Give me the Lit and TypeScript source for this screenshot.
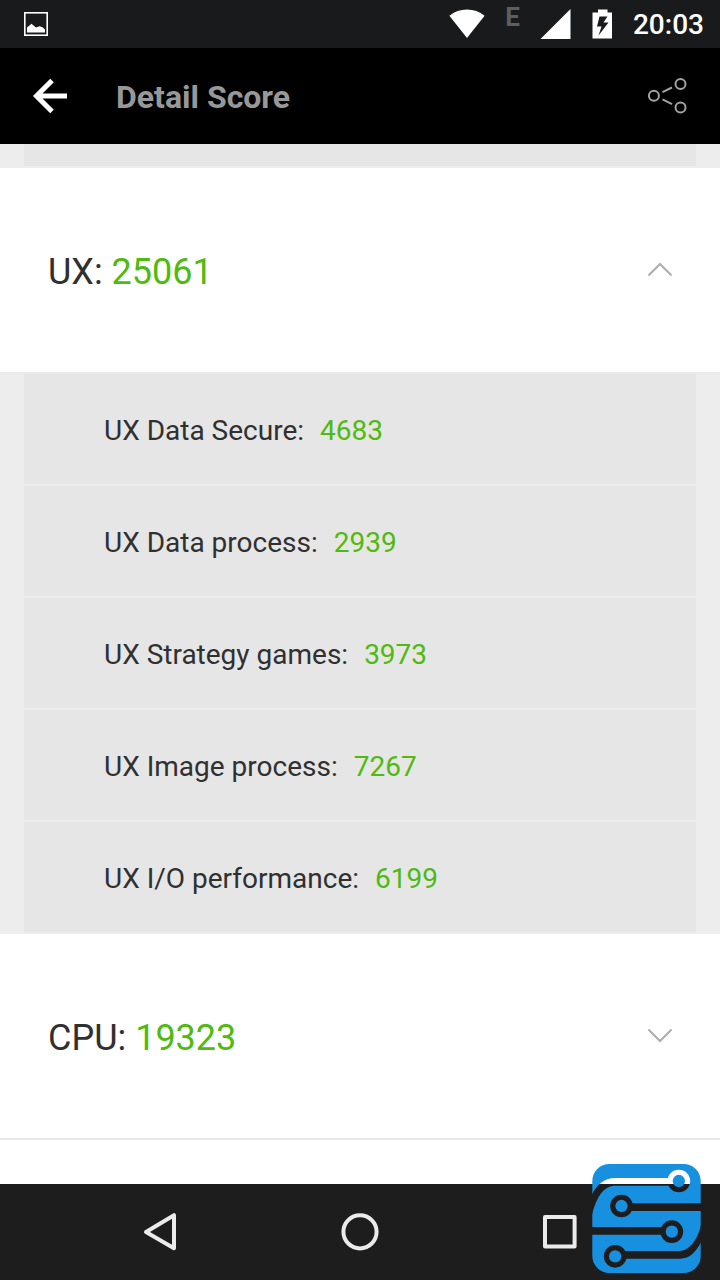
import { LitElement, html, css, nothing } from "lit";
import { customElement, property, state } from "lit/decorators.js";

interface Entry {
  label: string;
  value: number;
}

interface Section extends Entry {
  items: Entry[];
}

const SECTIONS: Section[] = [
  {
    label: "UX",
    value: 25061,
    items: [
      { label: "UX Data Secure", value: 4683 },
      { label: "UX Data process", value: 2939 },
      { label: "UX Strategy games", value: 3973 },
      { label: "UX Image process", value: 7267 },
      { label: "UX I/O performance", value: 6199 },
    ],
  },
  { label: "CPU", value: 19323, items: [] },
];

@customElement("status-bar")
class StatusBar extends LitElement {
  static styles = css`
    :host {
      display: flex;
      align-items: center;
      flex: none;
      box-sizing: border-box;
      height: 48px;
      padding: 0 16px 0 24px;
      background: #191a1c;
      color: #fff;
    }
    svg {
      display: block;
      flex: none;
    }
    .picture {
      margin-right: auto;
    }
    .icons {
      display: flex;
      align-items: center;
      gap: 20px;
      height: 48px;
    }
    .network {
      align-self: flex-start;
      padding-top: 2px;
      font-size: 26px;
      line-height: 30px;
      font-weight: 700;
      color: #5d5e60;
    }
    .time {
      padding-top: 2px;
      font-size: 28px;
      line-height: 32px;
      font-weight: 500;
    }
  `;

  render() {
    return html`
      <svg class="picture" width="24" height="24" viewBox="0 0 24 24">
        <rect x="0.8" y="0.8" width="22.4" height="22.4" fill="none" stroke="#fff" stroke-width="1.6" />
        <path d="M3 20.5V15.5L7.5 11.7L12 15.6L15.5 14.3L18.5 15.2L21 17.5V20.5Z" fill="#fff" />
      </svg>
      <div class="icons">
        <svg width="36" height="30" viewBox="0 0 36 30">
          <path d="M0.4 6.8Q8 0.6 18 0.6T35.6 6.8L18 29Z" fill="#fff" />
        </svg>
        <span class="network">E</span>
        <svg width="31" height="30" viewBox="0 0 31 30">
          <path d="M30.5 0V30H0.5Z" fill="#fff" />
        </svg>
        <svg width="22" height="30" viewBox="0 0 22 30">
          <path fill="#fff" fill-rule="evenodd"
            d="M7 0.5H16.5V3.5H21V29.5H1.5V3.5H7ZM8.5 7.5L6 17.5H10.5L7.5 26.5L17.5 13.5H12.5L16.5 7.5Z" />
        </svg>
        <span class="time">20:03</span>
      </div>
    `;
  }
}

@customElement("app-bar")
class AppBar extends LitElement {
  @property() heading = "";

  static styles = css`
    :host {
      display: flex;
      align-items: center;
      flex: none;
      height: 96px;
      padding: 0 32px;
      background: #000;
    }
    .action {
      flex: none;
      padding: 0;
      border: 0;
      background: none;
      cursor: pointer;
    }
    .action svg {
      display: block;
    }
    .title {
      flex: 1;
      margin: 0 0 0 48px;
      padding-top: 2px;
      font-size: 32px;
      line-height: 40px;
      font-weight: 700;
      color: #989898;
    }
  `;

  render() {
    return html`
      <button class="action" aria-label="Back">
        <svg width="36" height="36" viewBox="0 0 36 36" fill="none" stroke="#fff" stroke-width="5">
          <path d="M20 2.5L4.5 18L20 33.5M4 18H35" />
        </svg>
      </button>
      <h1 class="title">${this.heading}</h1>
      <button class="action" aria-label="Share">
        <svg width="42" height="38" viewBox="0 0 42 38" fill="none" stroke="#a3a3a3" stroke-width="2">
          <circle cx="7.9" cy="18.8" r="5" />
          <circle cx="34.5" cy="7" r="5" />
          <circle cx="34.5" cy="30.6" r="5" />
          <path d="M16.5 15.2L26 10.5M16.5 22.3L26 27.1" />
        </svg>
      </button>
    `;
  }
}

@customElement("score-section")
class ScoreSection extends LitElement {
  @property({ attribute: false }) section!: Section;
  @property({ type: Boolean }) open = false;

  static styles = css`
    :host {
      display: block;
    }
    .header {
      display: flex;
      align-items: center;
      justify-content: space-between;
      box-sizing: border-box;
      width: 100%;
      height: 206px;
      padding: 4px 48px 0;
      border: 0;
      border-bottom: 2px solid #e8e8e8;
      background: #fff;
      font: inherit;
      font-size: 36px;
      line-height: 44px;
      color: #303030;
      text-align: left;
      cursor: pointer;
    }
    .header.open {
      border-bottom-color: #ebebeb;
    }
    .value {
      color: #4fba0f;
    }
    .chevron {
      display: block;
      fill: none;
      stroke: #adadad;
      stroke-width: 2;
    }
    .list {
      display: flow-root;
      margin: 0;
      padding: 0 24px;
      list-style: none;
      background: #ededed;
    }
    .item {
      display: flex;
      align-items: center;
      gap: 16px;
      height: 110px;
      padding: 4px 80px 0;
      box-sizing: border-box;
      margin-bottom: 2px;
      background: #e6e6e6;
      font-size: 28px;
      line-height: 36px;
      color: #303030;
    }
  `;

  private toggle() {
    this.open = !this.open;
  }

  render() {
    const { label, value, items } = this.section;
    return html`
      <button class="header ${this.open ? "open" : ""}" aria-expanded=${this.open} @click=${this.toggle}>
        <span>${label}: <span class="value">${value}</span></span>
        <svg class="chevron" width="24" height="20" viewBox="0 0 24 20">
          <path d=${this.open ? "M0.5 13.5L12 2L23.5 13.5" : "M0.5 1.5L12 13L23.5 1.5"} />
        </svg>
      </button>
      ${this.open && items.length
        ? html`<ul class="list">
            ${items.map(
              (item) => html`<li class="item">
                <span>${item.label}:</span><span class="value">${item.value}</span>
              </li>`
            )}
          </ul>`
        : nothing}
    `;
  }
}

@customElement("nav-bar")
class NavBar extends LitElement {
  static styles = css`
    :host {
      display: grid;
      grid-template-columns: repeat(3, 1fr);
      flex: none;
      height: 96px;
      padding: 0 60px;
      background: #1d1d1d;
    }
    .key {
      display: grid;
      place-items: center;
      padding: 0;
      border: 0;
      background: none;
      cursor: pointer;
    }
    svg {
      fill: none;
      stroke: #ebebeb;
      stroke-width: 4;
      stroke-linejoin: round;
    }
  `;

  render() {
    return html`
      <button class="key" aria-label="Back">
        <svg width="40" height="40" viewBox="0 0 40 40"><path d="M34 3.2V36.2L6 20Z" /></svg>
      </button>
      <button class="key" aria-label="Home">
        <svg width="40" height="40" viewBox="0 0 40 40"><circle cx="20" cy="19.8" r="16.6" /></svg>
      </button>
      <button class="key" aria-label="Recent apps">
        <svg width="40" height="40" viewBox="0 0 40 40"><rect x="5" y="5" width="29.6" height="29.4" /></svg>
      </button>
    `;
  }
}

@customElement("app-root")
class AppRoot extends LitElement {
  @state() private sections = SECTIONS;

  static styles = css`
    :host {
      position: relative;
      display: flex;
      flex-direction: column;
      height: 100vh;
      overflow: hidden;
      background: #fff;
      font-family: Roboto, sans-serif;
    }
    .scores {
      flex: 1;
      min-height: 0;
      overflow: hidden;
    }
    .previous {
      height: 22px;
      padding: 0 24px 2px;
      background: #ededed;
    }
    .previous-item {
      height: 100%;
      background: #e6e6e6;
    }
    .badge {
      position: absolute;
      right: 19px;
      bottom: 7px;
      display: block;
    }
  `;

  render() {
    return html`
      <status-bar></status-bar>
      <app-bar heading="Detail Score"></app-bar>
      <main class="scores">
        <div class="previous"><div class="previous-item"></div></div>
        ${this.sections.map(
          (section) => html`<score-section .section=${section} ?open=${section.items.length > 0}></score-section>`
        )}
      </main>
      <nav-bar></nav-bar>
      <svg class="badge" width="109" height="109" viewBox="0 0 326 327">
        <mask id="traces">
          <rect width="326" height="327" rx="52" fill="#fff" />
          <g fill="#000">
            <path d="M-2 94C14 64 32 42 70 42H232V65H70C36 65 14 94 -2 158Z" />
            <path d="M115 118H328V141H115Z" />
            <path d="M-2 189H210V212H-2Z" />
            <path d="M98 261H258C294 261 318 224 328 176V232C312 262 296 284 262 284H98Z" />
            <circle cx="260" cy="51" r="34" />
            <circle cx="88" cy="126" r="34" />
            <circle cx="239" cy="203" r="34" />
            <circle cx="69" cy="277" r="34" />
          </g>
          <g fill="#fff">
            <circle cx="260" cy="51" r="18.5" />
            <circle cx="88" cy="126" r="18.5" />
            <circle cx="239" cy="203" r="18.5" />
            <circle cx="69" cy="277" r="18.5" />
          </g>
        </mask>
        <rect width="326" height="327" fill="#1890e0" mask="url(#traces)" />
      </svg>
    `;
  }
}
